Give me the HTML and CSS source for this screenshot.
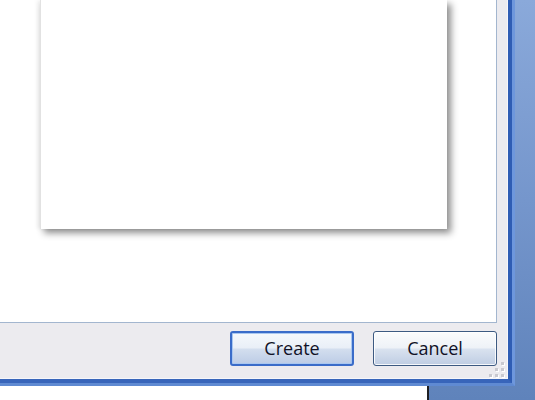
FILE: index.html
```html
<!DOCTYPE html>
<html>
<head>
<meta charset="utf-8">
<link rel="stylesheet" href="styles.css">
</head>
<body>
<div class="screen">
  <div class="dialog">
    <div class="client">
      <div class="panel">
        <div class="paper"></div>
      </div>
      <div class="footer">
        <button class="btn btn-default">Create</button>
        <button class="btn">Cancel</button>
        <svg class="grip" width="20" height="20" viewBox="0 0 20 20">
          <g fill="#ffffff">
            <rect x="16" y="4" width="3" height="3"/>
            <rect x="10" y="10" width="3" height="3"/>
            <rect x="16" y="10" width="3" height="3"/>
            <rect x="4" y="16" width="3" height="3"/>
            <rect x="10" y="16" width="3" height="3"/>
            <rect x="16" y="16" width="3" height="3"/>
          </g>
          <g fill="#c9c9d0">
            <rect x="15" y="3" width="3" height="3"/>
            <rect x="9" y="9" width="3" height="3"/>
            <rect x="15" y="9" width="3" height="3"/>
            <rect x="3" y="15" width="3" height="3"/>
            <rect x="9" y="15" width="3" height="3"/>
            <rect x="15" y="15" width="3" height="3"/>
          </g>
        </svg>
      </div>
    </div>
  </div>
  <div class="below"></div>
</div>
</body>
</html>
```

FILE: styles.css
```css
html, body {
  margin: 0;
  padding: 0;
}

.screen {
  width: 535px;
  height: 400px;
  overflow: hidden;
  background: linear-gradient(180deg, #8aa9da 0%, #7596cc 50%, #5f83bb 100%);
}

.dialog {
  width: 515px;
  height: 386px;
  box-sizing: border-box;
  border-right: 3px solid #6e97dc;
  border-bottom: 3px solid #5f8ad2;
}

.client {
  height: 100%;
  box-sizing: border-box;
  background: #ecebef;
  border-right: 4px solid #2f5db4;
  border-bottom: 4px solid #3865ba;
  padding-right: 11px;
  box-shadow: inset -1px -1px 0 #f6f6fa;
  display: flex;
  flex-direction: column;
  position: relative;
}

.panel {
  height: 323px;
  box-sizing: border-box;
  background: #ffffff;
  border-right: 1px solid #a3b6cf;
  border-bottom: 1px solid #a3b6cf;
  overflow: hidden;
}

.paper {
  margin-left: 40px;
  width: 407px;
  height: 229px;
  background: #ffffff;
  border-left: 1px solid #e2e2e2;
  box-sizing: border-box;
  box-shadow: 4px 4px 7px rgba(0, 0, 0, 0.45), -3px 0 4px rgba(0, 0, 0, 0.06);
}

.footer {
  flex: 1;
  display: flex;
  justify-content: flex-end;
  align-items: flex-start;
  gap: 19px;
  padding-top: 8px;
  padding-right: 0;
}

.btn {
  width: 124px;
  height: 35px;
  box-sizing: border-box;
  margin: 0;
  padding: 0 0 1px 0;
  font-family: "Open Sans", "Noto Sans", sans-serif;
  font-size: 18px;
  font-weight: 500;
  color: #111126;
  border: 1px solid #3d5a82;
  border-radius: 3px;
  background: linear-gradient(180deg, #fbfcfd 0%, #eef2f7 48%, #d9e2ef 52%, #bfcde3 100%);
  box-shadow: inset 0 0 0 1px rgba(255, 255, 255, 0.85);
}

.btn-default {
  border: 2px solid #3a6cc9;
  box-shadow: inset 0 0 0 1px #a9c7f0;
  background: linear-gradient(180deg, #f5f8fc 0%, #e9eff7 48%, #d3deee 52%, #bccce6 100%);
}

.grip {
  position: absolute;
  right: 2px;
  bottom: 0;
}

.below {
  width: 427px;
  height: 14px;
  background: #ffffff;
  border-right: 2px solid #1e1e22;
}
```
